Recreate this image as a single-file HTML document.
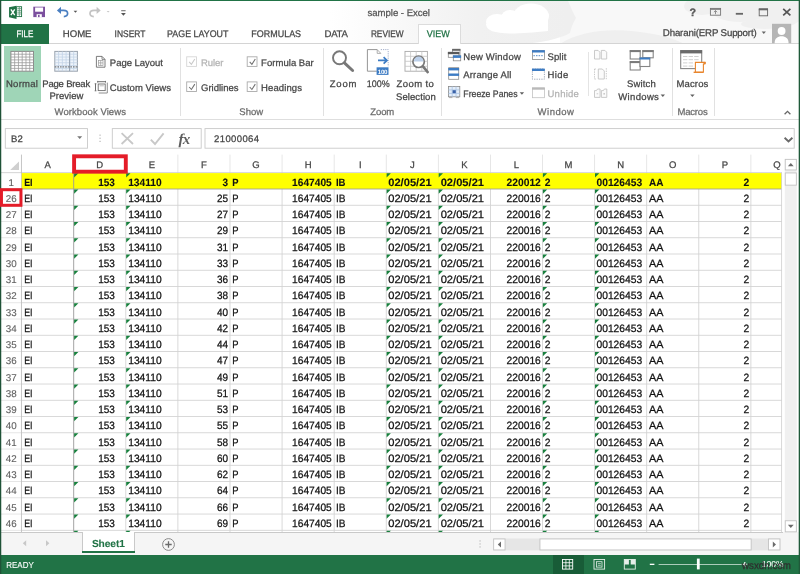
<!DOCTYPE html>
<html><head><meta charset="utf-8"><title>sample - Excel</title>
<style>
html,body{margin:0;padding:0;background:#fff;}
body{width:800px;height:574px;position:relative;overflow:hidden;font-family:"Liberation Sans",sans-serif;text-rendering:geometricPrecision;}
.r{position:absolute;display:block;}
.t{position:absolute;display:block;white-space:pre;line-height:1;}
</style></head><body>
<div class="r" style="left:0.00px;top:0.00px;width:800.00px;height:574.00px;background:#fff;"></div>
<svg class="r" style="left:320.00px;top:1.00px" width="479" height="43" viewBox="0 0 479 43"><defs><linearGradient id="cg" gradientUnits="userSpaceOnUse" x1="10" x2="248" y1="0" y2="0"><stop offset="0" stop-color="#fff"/><stop offset="0.62" stop-color="#f1f1f1"/><stop offset="1" stop-color="#efefef"/></linearGradient></defs><rect x="240" y="0" width="239" height="43" fill="#f8f8f8"/><path d="M10 0H248C251 6 253 12 256 17C253 22 251 27 250 32C240 38 220 42 200 43H10Z" fill="url(#cg)"/><g fill="#fff"><ellipse cx="177" cy="21" rx="11" ry="8"/><ellipse cx="190" cy="17" rx="9" ry="8"/><ellipse cx="211" cy="15" rx="18" ry="12.5"/><path d="M166 23C166 34 190 34 228 30L228 16L180 16Z"/></g><path d="M240 43C260 30 290 27 320 31S355 39 365 43Z" fill="#efefef"/><g fill="#f0f0f0"><ellipse cx="382" cy="5" rx="18" ry="9"/><ellipse cx="420" cy="8" rx="30" ry="13"/><ellipse cx="462" cy="10" rx="22" ry="16"/><ellipse cx="445" cy="23" rx="24" ry="5"/></g></svg>
<div class="r" style="left:1.00px;top:23.80px;width:48.20px;height:19.90px;background:#217346;"></div>
<div class="r" style="left:49.20px;top:43.20px;width:750.00px;height:0.90px;background:#d4d4d4;"></div>
<div class="r" style="left:417.50px;top:24.20px;width:43.00px;height:20.30px;background:#fff;border:0.9px solid #dcdcdc;border-bottom:none;box-sizing:border-box;"></div>
<div class="r" style="left:1.00px;top:119.00px;width:798.00px;height:0.90px;background:#dedede;"></div>
<div class="r" style="left:179.70px;top:48.00px;width:0.90px;height:67.50px;background:#e1e1e1;"></div>
<div class="r" style="left:322.50px;top:48.00px;width:0.90px;height:67.50px;background:#e1e1e1;"></div>
<div class="r" style="left:441.00px;top:48.00px;width:0.90px;height:67.50px;background:#e1e1e1;"></div>
<div class="r" style="left:671.60px;top:48.00px;width:0.90px;height:67.50px;background:#e1e1e1;"></div>
<div class="r" style="left:714.10px;top:48.00px;width:0.90px;height:67.50px;background:#e1e1e1;"></div>
<div class="r" style="left:588.10px;top:52.30px;width:0.90px;height:44.00px;background:#e4e4e4;"></div>
<div class="r" style="left:4.30px;top:46.30px;width:36.70px;height:55.70px;background:#9fd5b7;"></div>
<svg class="r" style="left:0.00px;top:0.00px" width="800" height="574" viewBox="0 0 800 574"><rect x="5.3" y="128.6" width="82.20" height="19.60" fill="#fff" stroke="#c9c9c9" stroke-width="0.9"/><rect x="112.3" y="128.6" width="88.90" height="19.60" fill="#fff" stroke="#c9c9c9" stroke-width="0.9"/><rect x="205" y="128.6" width="589.20" height="19.60" fill="#fff" stroke="#c9c9c9" stroke-width="0.9"/></svg>
<svg class="r" style="left:0.00px;top:0.00px" width="800" height="574" viewBox="0 0 800 574"><rect x="125.38" y="154.60" width="0.85" height="18.10" fill="#e2e2e2"/><rect x="125.38" y="172.70" width="0.85" height="359.60" fill="#d2d2d2"/><rect x="177.46" y="154.60" width="0.85" height="18.10" fill="#e2e2e2"/><rect x="177.46" y="172.70" width="0.85" height="359.60" fill="#d2d2d2"/><rect x="229.56" y="154.60" width="0.85" height="18.10" fill="#e2e2e2"/><rect x="229.56" y="172.70" width="0.85" height="359.60" fill="#d2d2d2"/><rect x="281.64" y="154.60" width="0.85" height="18.10" fill="#e2e2e2"/><rect x="281.64" y="172.70" width="0.85" height="359.60" fill="#d2d2d2"/><rect x="333.74" y="154.60" width="0.85" height="18.10" fill="#e2e2e2"/><rect x="333.74" y="172.70" width="0.85" height="359.60" fill="#d2d2d2"/><rect x="385.82" y="154.60" width="0.85" height="18.10" fill="#e2e2e2"/><rect x="385.82" y="172.70" width="0.85" height="359.60" fill="#d2d2d2"/><rect x="437.91" y="154.60" width="0.85" height="18.10" fill="#e2e2e2"/><rect x="437.91" y="172.70" width="0.85" height="359.60" fill="#d2d2d2"/><rect x="490.00" y="154.60" width="0.85" height="18.10" fill="#e2e2e2"/><rect x="490.00" y="172.70" width="0.85" height="359.60" fill="#d2d2d2"/><rect x="542.10" y="154.60" width="0.85" height="18.10" fill="#e2e2e2"/><rect x="542.10" y="172.70" width="0.85" height="359.60" fill="#d2d2d2"/><rect x="594.19" y="154.60" width="0.85" height="18.10" fill="#e2e2e2"/><rect x="594.19" y="172.70" width="0.85" height="359.60" fill="#d2d2d2"/><rect x="646.28" y="154.60" width="0.85" height="18.10" fill="#e2e2e2"/><rect x="646.28" y="172.70" width="0.85" height="359.60" fill="#d2d2d2"/><rect x="698.37" y="154.60" width="0.85" height="18.10" fill="#e2e2e2"/><rect x="698.37" y="172.70" width="0.85" height="359.60" fill="#d2d2d2"/><rect x="750.46" y="154.60" width="0.85" height="18.10" fill="#e2e2e2"/><rect x="750.46" y="172.70" width="0.85" height="359.60" fill="#d2d2d2"/><rect x="73.28" y="154.60" width="0.85" height="18.10" fill="#e2e2e2"/><rect x="1.00" y="204.83" width="20.40" height="0.85" fill="#e2e2e2"/><rect x="21.40" y="204.83" width="761.00" height="0.85" fill="#d2d2d2"/><rect x="1.00" y="221.08" width="20.40" height="0.85" fill="#e2e2e2"/><rect x="21.40" y="221.08" width="761.00" height="0.85" fill="#d2d2d2"/><rect x="1.00" y="237.33" width="20.40" height="0.85" fill="#e2e2e2"/><rect x="21.40" y="237.33" width="761.00" height="0.85" fill="#d2d2d2"/><rect x="1.00" y="253.58" width="20.40" height="0.85" fill="#e2e2e2"/><rect x="21.40" y="253.58" width="761.00" height="0.85" fill="#d2d2d2"/><rect x="1.00" y="269.83" width="20.40" height="0.85" fill="#e2e2e2"/><rect x="21.40" y="269.83" width="761.00" height="0.85" fill="#d2d2d2"/><rect x="1.00" y="286.09" width="20.40" height="0.85" fill="#e2e2e2"/><rect x="21.40" y="286.09" width="761.00" height="0.85" fill="#d2d2d2"/><rect x="1.00" y="302.34" width="20.40" height="0.85" fill="#e2e2e2"/><rect x="21.40" y="302.34" width="761.00" height="0.85" fill="#d2d2d2"/><rect x="1.00" y="318.59" width="20.40" height="0.85" fill="#e2e2e2"/><rect x="21.40" y="318.59" width="761.00" height="0.85" fill="#d2d2d2"/><rect x="1.00" y="334.84" width="20.40" height="0.85" fill="#e2e2e2"/><rect x="21.40" y="334.84" width="761.00" height="0.85" fill="#d2d2d2"/><rect x="1.00" y="351.09" width="20.40" height="0.85" fill="#e2e2e2"/><rect x="21.40" y="351.09" width="761.00" height="0.85" fill="#d2d2d2"/><rect x="1.00" y="367.35" width="20.40" height="0.85" fill="#e2e2e2"/><rect x="21.40" y="367.35" width="761.00" height="0.85" fill="#d2d2d2"/><rect x="1.00" y="383.60" width="20.40" height="0.85" fill="#e2e2e2"/><rect x="21.40" y="383.60" width="761.00" height="0.85" fill="#d2d2d2"/><rect x="1.00" y="399.85" width="20.40" height="0.85" fill="#e2e2e2"/><rect x="21.40" y="399.85" width="761.00" height="0.85" fill="#d2d2d2"/><rect x="1.00" y="416.10" width="20.40" height="0.85" fill="#e2e2e2"/><rect x="21.40" y="416.10" width="761.00" height="0.85" fill="#d2d2d2"/><rect x="1.00" y="432.35" width="20.40" height="0.85" fill="#e2e2e2"/><rect x="21.40" y="432.35" width="761.00" height="0.85" fill="#d2d2d2"/><rect x="1.00" y="448.61" width="20.40" height="0.85" fill="#e2e2e2"/><rect x="21.40" y="448.61" width="761.00" height="0.85" fill="#d2d2d2"/><rect x="1.00" y="464.86" width="20.40" height="0.85" fill="#e2e2e2"/><rect x="21.40" y="464.86" width="761.00" height="0.85" fill="#d2d2d2"/><rect x="1.00" y="481.11" width="20.40" height="0.85" fill="#e2e2e2"/><rect x="21.40" y="481.11" width="761.00" height="0.85" fill="#d2d2d2"/><rect x="1.00" y="497.36" width="20.40" height="0.85" fill="#e2e2e2"/><rect x="21.40" y="497.36" width="761.00" height="0.85" fill="#d2d2d2"/><rect x="1.00" y="513.62" width="20.40" height="0.85" fill="#e2e2e2"/><rect x="21.40" y="513.62" width="761.00" height="0.85" fill="#d2d2d2"/><rect x="1.00" y="529.87" width="20.40" height="0.85" fill="#e2e2e2"/><rect x="21.40" y="529.87" width="761.00" height="0.85" fill="#d2d2d2"/><rect x="1.00" y="172.27" width="781.40" height="0.85" fill="#cdcdcd"/><rect x="20.97" y="154.60" width="0.85" height="377.70" fill="#bcbcbc"/><rect x="21.80" y="173.10" width="760.60" height="15.90" fill="#ffff00"/><rect x="73.26" y="172.70" width="0.9" height="359.60" fill="#9a9a9a"/><rect x="1.00" y="188.55" width="781.40" height="0.9" fill="#a4a492"/></svg>
<div class="r" style="left:782.40px;top:150.00px;width:17.60px;height:382.30px;background:#fff;"></div>
<svg class="r" style="left:9.60px;top:160.90px" width="9.4" height="9.2" viewBox="0 0 9.4 9.2"><path d="M9.4 0V9.2H0Z" fill="#cfcfcf"/></svg>
<svg class="r" style="left:0.00px;top:0.00px" width="800" height="574" viewBox="0 0 800 574"><g fill="#17803d"><path d="M74.1 173.2h4.3l-4.3 4.3z"/><path d="M126.2 173.2h4.3l-4.3 4.3z"/><path d="M386.6 173.2h4.3l-4.3 4.3z"/><path d="M438.7 173.2h4.3l-4.3 4.3z"/><path d="M542.9 173.2h4.3l-4.3 4.3z"/><path d="M595.0 173.2h4.3l-4.3 4.3z"/><path d="M74.1 189.5h4.3l-4.3 4.3z"/><path d="M126.2 189.5h4.3l-4.3 4.3z"/><path d="M386.6 189.5h4.3l-4.3 4.3z"/><path d="M438.7 189.5h4.3l-4.3 4.3z"/><path d="M542.9 189.5h4.3l-4.3 4.3z"/><path d="M595.0 189.5h4.3l-4.3 4.3z"/><path d="M74.1 205.8h4.3l-4.3 4.3z"/><path d="M126.2 205.8h4.3l-4.3 4.3z"/><path d="M386.6 205.8h4.3l-4.3 4.3z"/><path d="M438.7 205.8h4.3l-4.3 4.3z"/><path d="M542.9 205.8h4.3l-4.3 4.3z"/><path d="M595.0 205.8h4.3l-4.3 4.3z"/><path d="M74.1 222.0h4.3l-4.3 4.3z"/><path d="M126.2 222.0h4.3l-4.3 4.3z"/><path d="M386.6 222.0h4.3l-4.3 4.3z"/><path d="M438.7 222.0h4.3l-4.3 4.3z"/><path d="M542.9 222.0h4.3l-4.3 4.3z"/><path d="M595.0 222.0h4.3l-4.3 4.3z"/><path d="M74.1 238.3h4.3l-4.3 4.3z"/><path d="M126.2 238.3h4.3l-4.3 4.3z"/><path d="M386.6 238.3h4.3l-4.3 4.3z"/><path d="M438.7 238.3h4.3l-4.3 4.3z"/><path d="M542.9 238.3h4.3l-4.3 4.3z"/><path d="M595.0 238.3h4.3l-4.3 4.3z"/><path d="M74.1 254.5h4.3l-4.3 4.3z"/><path d="M126.2 254.5h4.3l-4.3 4.3z"/><path d="M386.6 254.5h4.3l-4.3 4.3z"/><path d="M438.7 254.5h4.3l-4.3 4.3z"/><path d="M542.9 254.5h4.3l-4.3 4.3z"/><path d="M595.0 254.5h4.3l-4.3 4.3z"/><path d="M74.1 270.8h4.3l-4.3 4.3z"/><path d="M126.2 270.8h4.3l-4.3 4.3z"/><path d="M386.6 270.8h4.3l-4.3 4.3z"/><path d="M438.7 270.8h4.3l-4.3 4.3z"/><path d="M542.9 270.8h4.3l-4.3 4.3z"/><path d="M595.0 270.8h4.3l-4.3 4.3z"/><path d="M74.1 287.0h4.3l-4.3 4.3z"/><path d="M126.2 287.0h4.3l-4.3 4.3z"/><path d="M386.6 287.0h4.3l-4.3 4.3z"/><path d="M438.7 287.0h4.3l-4.3 4.3z"/><path d="M542.9 287.0h4.3l-4.3 4.3z"/><path d="M595.0 287.0h4.3l-4.3 4.3z"/><path d="M74.1 303.3h4.3l-4.3 4.3z"/><path d="M126.2 303.3h4.3l-4.3 4.3z"/><path d="M386.6 303.3h4.3l-4.3 4.3z"/><path d="M438.7 303.3h4.3l-4.3 4.3z"/><path d="M542.9 303.3h4.3l-4.3 4.3z"/><path d="M595.0 303.3h4.3l-4.3 4.3z"/><path d="M74.1 319.5h4.3l-4.3 4.3z"/><path d="M126.2 319.5h4.3l-4.3 4.3z"/><path d="M386.6 319.5h4.3l-4.3 4.3z"/><path d="M438.7 319.5h4.3l-4.3 4.3z"/><path d="M542.9 319.5h4.3l-4.3 4.3z"/><path d="M595.0 319.5h4.3l-4.3 4.3z"/><path d="M74.1 335.8h4.3l-4.3 4.3z"/><path d="M126.2 335.8h4.3l-4.3 4.3z"/><path d="M386.6 335.8h4.3l-4.3 4.3z"/><path d="M438.7 335.8h4.3l-4.3 4.3z"/><path d="M542.9 335.8h4.3l-4.3 4.3z"/><path d="M595.0 335.8h4.3l-4.3 4.3z"/><path d="M74.1 352.0h4.3l-4.3 4.3z"/><path d="M126.2 352.0h4.3l-4.3 4.3z"/><path d="M386.6 352.0h4.3l-4.3 4.3z"/><path d="M438.7 352.0h4.3l-4.3 4.3z"/><path d="M542.9 352.0h4.3l-4.3 4.3z"/><path d="M595.0 352.0h4.3l-4.3 4.3z"/><path d="M74.1 368.3h4.3l-4.3 4.3z"/><path d="M126.2 368.3h4.3l-4.3 4.3z"/><path d="M386.6 368.3h4.3l-4.3 4.3z"/><path d="M438.7 368.3h4.3l-4.3 4.3z"/><path d="M542.9 368.3h4.3l-4.3 4.3z"/><path d="M595.0 368.3h4.3l-4.3 4.3z"/><path d="M74.1 384.5h4.3l-4.3 4.3z"/><path d="M126.2 384.5h4.3l-4.3 4.3z"/><path d="M386.6 384.5h4.3l-4.3 4.3z"/><path d="M438.7 384.5h4.3l-4.3 4.3z"/><path d="M542.9 384.5h4.3l-4.3 4.3z"/><path d="M595.0 384.5h4.3l-4.3 4.3z"/><path d="M74.1 400.8h4.3l-4.3 4.3z"/><path d="M126.2 400.8h4.3l-4.3 4.3z"/><path d="M386.6 400.8h4.3l-4.3 4.3z"/><path d="M438.7 400.8h4.3l-4.3 4.3z"/><path d="M542.9 400.8h4.3l-4.3 4.3z"/><path d="M595.0 400.8h4.3l-4.3 4.3z"/><path d="M74.1 417.0h4.3l-4.3 4.3z"/><path d="M126.2 417.0h4.3l-4.3 4.3z"/><path d="M386.6 417.0h4.3l-4.3 4.3z"/><path d="M438.7 417.0h4.3l-4.3 4.3z"/><path d="M542.9 417.0h4.3l-4.3 4.3z"/><path d="M595.0 417.0h4.3l-4.3 4.3z"/><path d="M74.1 433.3h4.3l-4.3 4.3z"/><path d="M126.2 433.3h4.3l-4.3 4.3z"/><path d="M386.6 433.3h4.3l-4.3 4.3z"/><path d="M438.7 433.3h4.3l-4.3 4.3z"/><path d="M542.9 433.3h4.3l-4.3 4.3z"/><path d="M595.0 433.3h4.3l-4.3 4.3z"/><path d="M74.1 449.5h4.3l-4.3 4.3z"/><path d="M126.2 449.5h4.3l-4.3 4.3z"/><path d="M386.6 449.5h4.3l-4.3 4.3z"/><path d="M438.7 449.5h4.3l-4.3 4.3z"/><path d="M542.9 449.5h4.3l-4.3 4.3z"/><path d="M595.0 449.5h4.3l-4.3 4.3z"/><path d="M74.1 465.8h4.3l-4.3 4.3z"/><path d="M126.2 465.8h4.3l-4.3 4.3z"/><path d="M386.6 465.8h4.3l-4.3 4.3z"/><path d="M438.7 465.8h4.3l-4.3 4.3z"/><path d="M542.9 465.8h4.3l-4.3 4.3z"/><path d="M595.0 465.8h4.3l-4.3 4.3z"/><path d="M74.1 482.0h4.3l-4.3 4.3z"/><path d="M126.2 482.0h4.3l-4.3 4.3z"/><path d="M386.6 482.0h4.3l-4.3 4.3z"/><path d="M438.7 482.0h4.3l-4.3 4.3z"/><path d="M542.9 482.0h4.3l-4.3 4.3z"/><path d="M595.0 482.0h4.3l-4.3 4.3z"/><path d="M74.1 498.3h4.3l-4.3 4.3z"/><path d="M126.2 498.3h4.3l-4.3 4.3z"/><path d="M386.6 498.3h4.3l-4.3 4.3z"/><path d="M438.7 498.3h4.3l-4.3 4.3z"/><path d="M542.9 498.3h4.3l-4.3 4.3z"/><path d="M595.0 498.3h4.3l-4.3 4.3z"/><path d="M74.1 514.5h4.3l-4.3 4.3z"/><path d="M126.2 514.5h4.3l-4.3 4.3z"/><path d="M386.6 514.5h4.3l-4.3 4.3z"/><path d="M438.7 514.5h4.3l-4.3 4.3z"/><path d="M542.9 514.5h4.3l-4.3 4.3z"/><path d="M595.0 514.5h4.3l-4.3 4.3z"/><path d="M74.1 530.8h4.3l-4.3 4.3z"/><path d="M126.2 530.8h4.3l-4.3 4.3z"/><path d="M386.6 530.8h4.3l-4.3 4.3z"/><path d="M438.7 530.8h4.3l-4.3 4.3z"/><path d="M542.9 530.8h4.3l-4.3 4.3z"/><path d="M595.0 530.8h4.3l-4.3 4.3z"/></g></svg>
<div class="r" style="left:1.00px;top:532.30px;width:798.00px;height:22.90px;background:#f5f5f5;"></div>
<div class="r" style="left:1.00px;top:531.85px;width:782.40px;height:0.90px;background:#c9c9c9;"></div>
<svg class="r" style="left:0.00px;top:0.00px" width="800" height="574" viewBox="0 0 800 574"><rect x="784.8" y="159" width="12" height="373.3" fill="#f0f0f0"/><rect x="785.25" y="159.35" width="11.10" height="10.60" fill="#fff" stroke="#c2c2c2" stroke-width="0.9"/><rect x="785.25" y="172.95" width="11.10" height="12.20" fill="#fff" stroke="#c2c2c2" stroke-width="0.9"/><rect x="785.25" y="520.75" width="11.10" height="11.10" fill="#fff" stroke="#c2c2c2" stroke-width="0.9"/><path d="M787.9 166.3h5.8l-2.9-3.2z" fill="#6a6a6a"/><path d="M787.9 524.8h5.8l-2.9 3.2z" fill="#6a6a6a"/><rect x="781.2" y="172.70" width="0.85" height="359.60" fill="#d2d2d2"/><rect x="493.2" y="538.5" width="287.2" height="11.9" fill="#e6e6e6"/><rect x="493.65" y="538.95" width="11.40" height="11.00" fill="#fff" stroke="#c2c2c2" stroke-width="0.9"/><rect x="768.55" y="538.95" width="11.40" height="11.00" fill="#fff" stroke="#c2c2c2" stroke-width="0.9"/><rect x="539.95" y="538.95" width="211.20" height="11.00" fill="#fff" stroke="#c2c2c2" stroke-width="0.9"/><path d="M501 541.6v5.8l-3.2-2.9z" fill="#6a6a6a"/><path d="M772.8 541.6v5.8l3.2-2.9z" fill="#6a6a6a"/><rect x="479.5" y="540.4" width="1.1" height="1.1" fill="#b0b0b0"/><rect x="479.5" y="543.4" width="1.1" height="1.1" fill="#b0b0b0"/><rect x="479.5" y="546.4" width="1.1" height="1.1" fill="#b0b0b0"/></svg>
<div class="r" style="left:82.40px;top:532.30px;width:52.50px;height:21.00px;background:#fff;border-left:0.9px solid #c9c9c9;border-right:0.9px solid #c9c9c9;box-sizing:border-box;"></div>
<div class="r" style="left:82.40px;top:551.30px;width:52.50px;height:1.80px;background:#217346;"></div>
<svg class="r" style="left:20.00px;top:538.00px" width="32" height="11" viewBox="0 0 32 11"><path d="M6.2 2.2v6l-3.4-3z" fill="#c8c8c8"/><path d="M26 2.2v6l3.4-3z" fill="#c8c8c8"/></svg>
<svg class="r" style="left:161.00px;top:536.50px" width="15" height="15" viewBox="0 0 15 15"><circle cx="7.5" cy="7.5" r="5.9" fill="none" stroke="#8a8a8a" stroke-width="1"/><path d="M4.3 7.5h6.4M7.5 4.3v6.4" stroke="#6a6a6a" stroke-width="1.3"/></svg>
<div class="r" style="left:0.00px;top:555.20px;width:800.00px;height:18.80px;background:#217346;"></div>
<div class="r" style="left:553.00px;top:555.20px;width:30.80px;height:18.80px;background:#185c37;"></div>
<svg class="r" style="left:0.00px;top:0.00px" width="800" height="574" viewBox="0 0 800 574"><rect x="0" y="0" width="800" height="1" fill="#217346"/><rect x="0" y="0" width="1.25" height="574" fill="#1f5237"/><rect x="798.7" y="0" width="1.3" height="574" fill="#1f5a3a"/></svg>
<svg class="r" style="left:0.00px;top:150.00px" width="140" height="60" viewBox="0 150 140 60"><rect x="74.1" y="156.3" width="51.7" height="15.4" fill="none" stroke="#e41c28" stroke-width="3.9"/><rect x="1.45" y="189.7" width="19.5" height="15.6" fill="none" stroke="#e41c28" stroke-width="3.0"/></svg>
<svg class="r" style="left:0;top:0;will-change:transform" width="800" height="574" viewBox="0 0 800 574"><path d="M9.05 7.2L16.5 5.7V19L9.05 17.3Z" fill="#217346"/><path d="M10.9 9.4L14.7 15.2M14.7 9.4L10.9 15.2" stroke="#fff" stroke-width="1.4" fill="none"/><rect x="16.6" y="6.7" width="5" height="9.9" fill="#fff" stroke="#217346" stroke-width="0.9"/><path d="M17.4 8.6h3.8M17.4 10.4h3.8M17.4 12.2h3.8M17.4 14h3.8M19.3 7v9.3" stroke="#217346" stroke-width="0.8" opacity="0.75"/><path d="M33.3 6.7H45V17.1H33.3Z" fill="#7b4f9e"/><rect x="35.1" y="7.5" width="8" height="4.2" fill="#fff"/><rect x="36.6" y="14.2" width="5.2" height="2.9" fill="#fff"/><rect x="38" y="14.9" width="1.6" height="2.2" fill="#7b4f9e"/><path d="M60.5 10.4H63.6C66.4 10.4 67.6 12.1 67.6 13.6C67.6 15.4 66.2 16.5 63.8 16.6" fill="none" stroke="#4a7fc1" stroke-width="1.7"/><path d="M56.9 10.4L61 6.8V14Z" fill="#4a7fc1"/><path d="M73.6 10.8h3.7l-1.85 2z" fill="#555"/><path d="M97.1 10.4H94C91.2 10.4 90 12.1 90 13.6C90 15.4 91.4 16.5 93.8 16.6" fill="none" stroke="#c3c3c3" stroke-width="1.7"/><path d="M100.7 10.4L96.6 6.8V14Z" fill="#c3c3c3"/><path d="M106.6 10.9h3l-1.5 1.7z" fill="#c8c8c8"/><path d="M121.2 10.3h4.4v0.9h-4.4z" fill="#555"/><path d="M121 12.9h4.8l-2.4 2.8z" fill="#555"/><text x="689.4" y="16" font-size="10.8" font-weight="bold" fill="#5c5c5c" stroke="#5c5c5c" stroke-width="0.35" font-family="Liberation Sans, sans-serif">?</text><rect x="710.4" y="8.4" width="10.2" height="6.8" fill="none" stroke="#777" stroke-width="0.9"/><path d="M710.4 9.2h10.2" stroke="#777" stroke-width="1.2"/><path d="M715.5 10.6v3.6M713.9 12.2l1.6-1.6 1.6 1.6" stroke="#777" stroke-width="0.8" fill="none"/><rect x="735.8" y="12.9" width="7.2" height="1.8" fill="#666"/><rect x="759.2" y="9.2" width="8.4" height="6.6" fill="none" stroke="#666" stroke-width="0.9"/><rect x="758.8" y="8.3" width="9.2" height="2" fill="#666"/><path d="M783.2 8.9L790.4 15.4M790.4 8.9L783.2 15.4" stroke="#555" stroke-width="1.7" fill="none"/><path d="M761.7 31.6h4.2l-2.1 2.3z" fill="#666"/><rect x="772" y="23.8" width="19.2" height="19.4" fill="#b5b5b5"/><circle cx="781.6" cy="31" r="3.9" fill="#fff"/><path d="M774.6 43.2C774.6 38.2 777.6 36.2 781.6 36.2S788.6 38.2 788.6 43.2Z" fill="#fff"/><rect x="10.9" y="51.4" width="22.6" height="19.8" fill="#fff" stroke="#8c8c8c" stroke-width="1"/><path d="M14.67 51.4v19.8M18.43 51.4v19.8M22.20 51.4v19.8M25.97 51.4v19.8M29.73 51.4v19.8M10.9 54.23h22.6M10.9 57.06h22.6M10.9 59.89h22.6M10.9 62.71h22.6M10.9 65.54h22.6M10.9 68.37h22.6" stroke="#9a9a9a" stroke-width="0.8" fill="none"/><rect x="54.8" y="51.4" width="22.6" height="19.8" fill="#eef4fb" stroke="#9aa3ad" stroke-width="1"/><path d="M58.57 51.4v19.8M62.33 51.4v19.8M66.10 51.4v19.8M69.87 51.4v19.8M73.63 51.4v19.8M54.8 54.23h22.6M54.8 57.06h22.6M54.8 59.89h22.6M54.8 62.71h22.6M54.8 65.54h22.6M54.8 68.37h22.6" stroke="#c3d3e6" stroke-width="0.8" fill="none"/><path d="M69.6 51.4v19.8" stroke="#93a0b0" stroke-width="1"/><path d="M54.8 66.9h22.6" stroke="#555" stroke-width="0.9" stroke-dasharray="1.6 1"/><path d="M96.4 56.4h5.6l3 3v7.8h-8.6z" fill="#fff" stroke="#6e6e6e" stroke-width="0.9"/><path d="M102 56.4v3h3" fill="none" stroke="#6e6e6e" stroke-width="0.8"/><rect x="98.4" y="60.4" width="4.6" height="5" fill="none" stroke="#9a9a9a" stroke-width="0.7"/><path d="M100.7 60.4v5M98.4 62.9h4.6" stroke="#9a9a9a" stroke-width="0.7"/><rect x="98.2" y="84" width="7" height="6.6" fill="#fff" stroke="#6e6e6e" stroke-width="0.9"/><path d="M99.6 85.8h4.2" stroke="#aaa" stroke-width="0.8"/><path d="M97.7 81.7h7.8M97.7 80.9v1.7M105.5 80.9v1.7M95.5 83.8v7M94.7 83.8h1.7M94.7 90.8h1.7" stroke="#6e6e6e" stroke-width="1" fill="none"/><path d="M107.3 82.6v10.4h-8.6" stroke="#8e8e8e" stroke-width="1" fill="none"/><rect x="186.7" y="56.8" width="9.8" height="9.6" fill="#fff" stroke="#d6d6d6" stroke-width="0.9"/><path d="M189.2 61.9l2.2 2.5 3.4-5.4" fill="none" stroke="#c9c9c9" stroke-width="1.05"/><rect x="186.7" y="81.9" width="9.8" height="9.6" fill="#fff" stroke="#ababab" stroke-width="0.9"/><path d="M189.2 87.0l2.2 2.5 3.4-5.4" fill="none" stroke="#707070" stroke-width="1.05"/><rect x="247.2" y="56.8" width="9.8" height="9.6" fill="#fff" stroke="#ababab" stroke-width="0.9"/><path d="M249.7 61.9l2.2 2.5 3.4-5.4" fill="none" stroke="#707070" stroke-width="1.05"/><rect x="247.2" y="81.9" width="9.8" height="9.6" fill="#fff" stroke="#ababab" stroke-width="0.9"/><path d="M249.7 87.0l2.2 2.5 3.4-5.4" fill="none" stroke="#707070" stroke-width="1.05"/><circle cx="339.5" cy="57.8" r="6.5" fill="none" stroke="#787878" stroke-width="1.9"/><path d="M344.4 62.9l8.2 7.6" stroke="#787878" stroke-width="3" stroke-linecap="round"/><path d="M377.2 49.6h-9.8v21.6h9.4" fill="none" stroke="#8a8a8a" stroke-width="0.9"/><path d="M377.2 49.6l3.6 3.8h-3.6z" fill="#fff" stroke="#9a9a9a" stroke-width="0.8"/><path d="M380.8 49.6h7.4v17" fill="none" stroke="#9aa7c4" stroke-width="0.9" stroke-dasharray="1.2 1"/><path d="M378 60.4h8.6M383.6 57.2l3.4 3.2-3.4 3.2" fill="none" stroke="#3d7cc4" stroke-width="1.7"/><rect x="376.6" y="67.3" width="11.9" height="7.6" fill="#3d7cc4"/><text x="382.5" y="73.6" font-size="6.2" font-weight="bold" fill="#fff" text-anchor="middle" font-family="Liberation Sans, sans-serif" style="letter-spacing:-0.3px">100</text><rect x="405" y="51.4" width="22.4" height="19.8" fill="#fff" stroke="#a8a8a8" stroke-width="0.9"/><path d="M405 56.3h22.4M405 61.3h22.4M405 66.3h22.4M410.6 51.4v19.8M416.2 51.4v19.8M421.8 51.4v19.8" stroke="#c4c4c4" stroke-width="0.8"/><circle cx="418.6" cy="61.8" r="5.7" fill="#fff" stroke="#787878" stroke-width="1.7"/><path d="M413.8 61.4a4.8 4.8 0 0 1 9.6 0z" fill="#bcd0ea"/><path d="M422.9 66.3l4.8 5.8" stroke="#787878" stroke-width="2.6" stroke-linecap="round"/><rect x="452.6" y="49.3" width="7.4" height="6" fill="#fff" stroke="#8a8a8a" stroke-width="0.8"/><rect x="452.2" y="48.9" width="8.2" height="1.9" fill="#666"/><rect x="448.3" y="52.3" width="10.6" height="5" fill="#fff" stroke="#8a8a8a" stroke-width="0.8"/><rect x="447.9" y="51.9" width="11.4" height="2.3" fill="#5a5a5a"/><rect x="453.3" y="55.8" width="7.4" height="5" fill="#fff" stroke="#8a8a8a" stroke-width="0.8"/><rect x="452.9" y="55.4" width="8.2" height="2.5" fill="#3d7cc4"/><rect x="448.7" y="67.7" width="10" height="11.6" fill="#fff" stroke="#8a8a8a" stroke-width="0.8"/><rect x="448.3" y="68" width="10.8" height="2.4" fill="#3d7cc4"/><rect x="448.3" y="73.5" width="10.8" height="2.4" fill="#3d7cc4"/><rect x="448.4" y="86.4" width="11.4" height="10.4" fill="#e4eefa" stroke="#8a8a8a" stroke-width="0.8"/><path d="M452.2 86.4v10.4M456 86.4v10.4M448.4 89.9h11.4M448.4 93.4h11.4" stroke="#a9c3e2" stroke-width="0.8"/><rect x="452.6" y="90.2" width="3.2" height="3" fill="#3a62a8"/><path d="M449 97.6h3.4M455.8 97.6h3.4" stroke="#9a9a9a" stroke-width="0.8"/><path d="M519.7 92.3h4.4l-2.2 2.4z" fill="#606060"/><rect x="532.4" y="50.6" width="12" height="8.8" fill="#fff" stroke="#8a8a8a" stroke-width="0.8"/><rect x="532" y="50.2" width="12.8" height="2.3" fill="#3d7cc4"/><path d="M533.4 55.7h10.4" stroke="#3d7cc4" stroke-width="0.9" stroke-dasharray="1.5 1.1"/><rect x="532.4" y="69" width="12" height="10.2" fill="#fff" stroke="#8a94a6" stroke-width="0.8" stroke-dasharray="1.3 1.1"/><rect x="532" y="68.6" width="12.8" height="2.4" fill="#3d7cc4"/><rect x="532.4" y="87.9" width="12" height="9.8" fill="#fff" stroke="#c2c2c2" stroke-width="0.8"/><rect x="532" y="87.5" width="12.8" height="2.2" fill="#b9b9b9"/><path d="M594.5 50.4h3.6l1.8 1.8v6.8h-5.4zM601.3 50.4h3.6l1.8 1.8v6.8h-5.4z" fill="#fbfbfb" stroke="#c4c4c4" stroke-width="0.9"/><path d="M594.5 69h2.2M594.5 79h2.2M594.5 69v10" fill="none" stroke="#c4c4c4" stroke-width="0.9" stroke-dasharray="1.4 1"/><path d="M598.3 69h4l2 2v8h-6z" fill="#fbfbfb" stroke="#c4c4c4" stroke-width="0.9"/><path d="M606.3 68.2v12" stroke="#c4c4c4" stroke-width="0.9" stroke-dasharray="1.4 1"/><path d="M594.5 90.6h2l1 -1.6h2.6v8.4h-5.6zM601.4 90.6h2l1 -1.6h2.4v8.4h-5.4z" fill="#fbfbfb" stroke="#c4c4c4" stroke-width="0.9"/><path d="M596.6 93.8h1.6M603.4 93.8h1.6M604.2 93v1.6" stroke="#c4c4c4" stroke-width="0.9"/><rect x="630.2" y="50.6" width="10" height="8.4" fill="#fff" stroke="#858585" stroke-width="1.1"/><rect x="629.8000000000001" y="50.2" width="10.8" height="1.9" fill="#7a7a7a"/><rect x="642.8" y="50.6" width="10.4" height="7.2" fill="#fff" stroke="#858585" stroke-width="1.1"/><rect x="642.4" y="50.2" width="11.200000000000001" height="1.9" fill="#7a7a7a"/><rect x="630.2" y="61.6" width="10" height="8.4" fill="#fff" stroke="#858585" stroke-width="1.1"/><rect x="629.8000000000001" y="61.2" width="10.8" height="1.9" fill="#7a7a7a"/><rect x="640" y="57.9" width="9.8" height="8.6" fill="#fff" stroke="#858585" stroke-width="1.1"/><rect x="639.6" y="57.5" width="10.600000000000001" height="2" fill="#3d7cc4"/><path d="M660.6 94.6h4.4l-2.2 2.4z" fill="#606060"/><rect x="680.7" y="50.6" width="21" height="18" fill="#fff" stroke="#858585" stroke-width="1.1"/><rect x="680.3000000000001" y="50.2" width="21.8" height="3.2" fill="#6a6a6a"/><path d="M683 56.5h16M683 59.7h16M683 62.9h10M683 66.1h10" stroke="#c9c9c9" stroke-width="0.9" stroke-dasharray="4.4 1.2"/><path d="M695.4 62.4h9.4v1.6h-1.4v8.2h-8z" fill="#fff" stroke="#e8862e" stroke-width="1.1"/><path d="M693.6 71.6h9.6v1.4h-9.6z" fill="#e8862e"/><path d="M703.6 61.9h2.2v2h-2.2z" fill="#e8862e"/><path d="M690.2 94.6h4.4l-2.2 2.4z" fill="#606060"/><path d="M784.6 114.2l2.9-2.9 2.9 2.9" fill="none" stroke="#666" stroke-width="1.3"/><path d="M77.2 136.2h5l-2.5 2.8z" fill="#777"/><rect x="99.5" y="134.6" width="1.1" height="1.1" fill="#a8a8a8"/><rect x="99.5" y="137.7" width="1.1" height="1.1" fill="#a8a8a8"/><rect x="99.5" y="140.8" width="1.1" height="1.1" fill="#a8a8a8"/><path d="M121.6 133.2l11.4 10.8M133 133.2l-11.4 10.8" stroke="#c8c8c8" stroke-width="1.8" fill="none"/><path d="M150.8 139.6l4.2 4.4 8.6-10.6" stroke="#c8c8c8" stroke-width="1.9" fill="none"/><text x="178.4" y="144" font-size="15" font-style="italic" font-weight="bold" fill="#5e5e5e" font-family="Liberation Serif, serif" style="letter-spacing:-0.6px">fx</text><path d="M784.6 137.8l3.9 3.6 3.9-3.6" fill="none" stroke="#6a6a6a" stroke-width="1.9"/><rect x="562.5" y="559.5" width="10.2" height="9.6" fill="none" stroke="#fff" stroke-width="0.9"/><path d="M565.9 559.5v9.6M569.3 559.5v9.6M562.5 562.7h10.2M562.5 565.9h10.2" stroke="#fff" stroke-width="0.8"/><rect x="594" y="559.5" width="10.6" height="9.6" fill="none" stroke="#e6efe9" stroke-width="0.9"/><rect x="596.6" y="561.7" width="5.4" height="5.4" fill="none" stroke="#e6efe9" stroke-width="0.8"/><path d="M597.8 563.6h3M597.8 565.3h3" stroke="#e6efe9" stroke-width="0.7"/><rect x="624.3" y="559.5" width="11" height="9.6" fill="none" stroke="#e6efe9" stroke-width="0.9"/><path d="M624.3 559.5h4.6v5h-4.6zM630.7 559.5h4.6v5h-4.6z" fill="#e6efe9"/><rect x="649.8" y="563.7" width="4.6" height="1.3" fill="#fff"/><rect x="658.6" y="564" width="83" height="0.8" fill="#cfe3d7"/><rect x="696.9" y="558.6" width="2.8" height="10.8" fill="#fff"/><path d="M742.4 564.3h4.8M744.8 561.9v4.8" stroke="#fff" stroke-width="1.2"/></svg>
<svg class="r" style="left:0;top:0;will-change:transform" width="800" height="574" viewBox="0 0 800 574" font-family="Liberation Sans, sans-serif"><defs><clipPath id="gc"><rect x="0" y="150" width="782.4" height="400"/></clipPath></defs><text x="367.52" y="16" font-size="9.6" fill="#555" stroke="#555" stroke-width="0.25" style="letter-spacing:-0.035px" >sample - Excel</text><text transform="translate(16.40 37) scale(0.8417 1)" font-size="9.6" fill="#fff" stroke="#fff" stroke-width="0.25" >FILE</text><text x="62.82" y="37" font-size="9.6" fill="#444" stroke="#444" stroke-width="0.25" style="letter-spacing:-0.035px" >HOME</text><text transform="translate(114.58 37) scale(0.8811 1)" font-size="9.6" fill="#444" stroke="#444" stroke-width="0.25" >INSERT</text><text transform="translate(167.06 37) scale(0.9252 1)" font-size="9.6" fill="#444" stroke="#444" stroke-width="0.25" >PAGE LAYOUT</text><text transform="translate(251.35 37) scale(0.9330 1)" font-size="9.6" fill="#444" stroke="#444" stroke-width="0.25" >FORMULAS</text><text x="324.52" y="37" font-size="9.6" fill="#444" stroke="#444" stroke-width="0.25" style="letter-spacing:-0.255px" >DATA</text><text transform="translate(370.88 37) scale(0.8652 1)" font-size="9.6" fill="#444" stroke="#444" stroke-width="0.25" >REVIEW</text><text transform="translate(426.75 37) scale(0.9401 1)" font-size="9.6" fill="#217346" stroke="#217346" stroke-width="0.25" >VIEW</text><text x="662.81" y="36" font-size="9.7" fill="#444" stroke="#444" stroke-width="0.25" style="letter-spacing:-0.150px" >Dharani(ERP Support)</text><text x="6.03" y="87" font-size="9.5" fill="#444" stroke="#444" stroke-width="0.25" style="letter-spacing:0.239px" >Normal</text><text x="42.32" y="87" font-size="9.5" fill="#444" stroke="#444" stroke-width="0.25" style="letter-spacing:-0.199px" >Page Break</text><text x="49.52" y="99" font-size="9.5" fill="#444" stroke="#444" stroke-width="0.25" style="letter-spacing:-0.005px" >Preview</text><text x="109.83" y="66" font-size="9.5" fill="#444" stroke="#444" stroke-width="0.25" style="letter-spacing:-0.018px" >Page Layout</text><text x="109.83" y="91" font-size="9.5" fill="#444" stroke="#444" stroke-width="0.25" style="letter-spacing:0.051px" >Custom Views</text><text x="54.52" y="115" font-size="9.5" fill="#6a6a6a" stroke="#6a6a6a" stroke-width="0.25" style="letter-spacing:0.075px" >Workbook Views</text><text x="201.03" y="66" font-size="9.5" fill="#b3b3b3" stroke="#b3b3b3" stroke-width="0.25" style="letter-spacing:-0.070px" >Ruler</text><text x="201.03" y="91" font-size="9.5" fill="#444" stroke="#444" stroke-width="0.25" style="letter-spacing:-0.004px" >Gridlines</text><text x="261.12" y="66" font-size="9.5" fill="#444" stroke="#444" stroke-width="0.25" style="letter-spacing:0.035px" >Formula Bar</text><text x="261.12" y="91" font-size="9.5" fill="#444" stroke="#444" stroke-width="0.25" style="letter-spacing:0.101px" >Headings</text><text x="239.33" y="115" font-size="9.5" fill="#6a6a6a" stroke="#6a6a6a" stroke-width="0.25" style="letter-spacing:0.021px" >Show</text><text x="329.82" y="87" font-size="9.5" fill="#444" stroke="#444" stroke-width="0.25" style="letter-spacing:0.742px" >Zoom</text><text transform="translate(366.75 87) scale(0.9406 1)" font-size="9.5" fill="#444" stroke="#444" stroke-width="0.25" >100%</text><text x="396.62" y="87" font-size="9.5" fill="#444" stroke="#444" stroke-width="0.25" style="letter-spacing:0.401px" >Zoom to</text><text x="396.02" y="100" font-size="9.5" fill="#444" stroke="#444" stroke-width="0.25" style="letter-spacing:0.085px" >Selection</text><text x="370.32" y="115" font-size="9.5" fill="#6a6a6a" stroke="#6a6a6a" stroke-width="0.25" style="letter-spacing:-0.108px" >Zoom</text><text x="463.32" y="60" font-size="9.5" fill="#444" stroke="#444" stroke-width="0.25" style="letter-spacing:0.222px" >New Window</text><text x="463.32" y="78" font-size="9.5" fill="#444" stroke="#444" stroke-width="0.25" style="letter-spacing:0.153px" >Arrange All</text><text transform="translate(463.37 97) scale(0.9157 1)" font-size="9.5" fill="#444" stroke="#444" stroke-width="0.25" >Freeze Panes</text><text x="547.52" y="60" font-size="9.5" fill="#444" stroke="#444" stroke-width="0.25" style="letter-spacing:0.094px" >Split</text><text x="547.52" y="78" font-size="9.5" fill="#444" stroke="#444" stroke-width="0.25" style="letter-spacing:0.403px" >Hide</text><text x="547.52" y="97" font-size="9.5" fill="#b3b3b3" stroke="#b3b3b3" stroke-width="0.25" style="letter-spacing:0.241px" >Unhide</text><text x="537.52" y="115" font-size="9.5" fill="#6a6a6a" stroke="#6a6a6a" stroke-width="0.25" style="letter-spacing:0.527px" >Window</text><text x="627.02" y="87" font-size="9.5" fill="#444" stroke="#444" stroke-width="0.25" style="letter-spacing:0.162px" >Switch</text><text x="618.32" y="100" font-size="9.5" fill="#444" stroke="#444" stroke-width="0.25" style="letter-spacing:0.330px" >Windows</text><text x="676.52" y="87" font-size="9.5" fill="#444" stroke="#444" stroke-width="0.25" style="letter-spacing:0.134px" >Macros</text><text x="677.52" y="115" font-size="9.5" fill="#6a6a6a" stroke="#6a6a6a" stroke-width="0.25" style="letter-spacing:-0.199px" >Macros</text><text x="10.93" y="142" font-size="9.5" fill="#444" stroke="#444" stroke-width="0.25" style="letter-spacing:0.315px" >B2</text><text x="214.03" y="142" font-size="9.5" fill="#444" stroke="#444" stroke-width="0.25" style="letter-spacing:0.398px" >21000064</text><text x="47.55" y="168" font-size="9.5" fill="#444" stroke="#444" stroke-width="0.25" text-anchor="middle" >A</text><text x="99.75" y="168" font-size="9.5" fill="#444" stroke="#444" stroke-width="0.25" text-anchor="middle" >D</text><text x="151.84" y="168" font-size="9.5" fill="#444" stroke="#444" stroke-width="0.25" text-anchor="middle" >E</text><text x="203.94" y="168" font-size="9.5" fill="#444" stroke="#444" stroke-width="0.25" text-anchor="middle" >F</text><text x="256.02" y="168" font-size="9.5" fill="#444" stroke="#444" stroke-width="0.25" text-anchor="middle" >G</text><text x="308.12" y="168" font-size="9.5" fill="#444" stroke="#444" stroke-width="0.25" text-anchor="middle" >H</text><text x="360.21" y="168" font-size="9.5" fill="#444" stroke="#444" stroke-width="0.25" text-anchor="middle" >I</text><text x="412.29" y="168" font-size="9.5" fill="#444" stroke="#444" stroke-width="0.25" text-anchor="middle" >J</text><text x="464.38" y="168" font-size="9.5" fill="#444" stroke="#444" stroke-width="0.25" text-anchor="middle" >K</text><text x="516.48" y="168" font-size="9.5" fill="#444" stroke="#444" stroke-width="0.25" text-anchor="middle" >L</text><text x="568.57" y="168" font-size="9.5" fill="#444" stroke="#444" stroke-width="0.25" text-anchor="middle" >M</text><text x="620.66" y="168" font-size="9.5" fill="#444" stroke="#444" stroke-width="0.25" text-anchor="middle" >N</text><text x="672.75" y="168" font-size="9.5" fill="#444" stroke="#444" stroke-width="0.25" text-anchor="middle" >O</text><text x="724.84" y="168" font-size="9.5" fill="#444" stroke="#444" stroke-width="0.25" text-anchor="middle" >P</text><text x="776.93" y="168" font-size="9.5" fill="#444" stroke="#444" stroke-width="0.25" text-anchor="middle" clip-path="url(#gc)">Q</text><text x="11.30" y="186" font-size="9.8" fill="#5e5e5e" stroke="#5e5e5e" stroke-width="0.12" text-anchor="middle" >1</text><text transform="translate(24.16 186) scale(0.8341 1)" font-size="10.6" fill="#111" stroke="#111" stroke-width="0.1" font-weight="bold" >EI</text><text transform="translate(98.20 186) scale(0.9417 1)" font-size="10.6" fill="#111" stroke="#111" stroke-width="0.1" font-weight="bold" >153</text><text transform="translate(128.19 186) scale(0.9646 1)" font-size="10.6" fill="#111" stroke="#111" stroke-width="0.1" font-weight="bold" >134110</text><text transform="translate(228.10 186) scale(0.94 1)" font-size="10.6" fill="#111" stroke="#111" stroke-width="0.1" text-anchor="end" font-weight="bold">3</text><text transform="translate(232.23 186) scale(0.8846 1)" font-size="10.6" fill="#111" stroke="#111" stroke-width="0.1" font-weight="bold" >P</text><text transform="translate(292.09 186) scale(0.9609 1)" font-size="10.6" fill="#111" stroke="#111" stroke-width="0.1" font-weight="bold" >1647405</text><text transform="translate(335.92 186) scale(0.9013 1)" font-size="10.6" fill="#111" stroke="#111" stroke-width="0.1" font-weight="bold" >IB</text><text transform="translate(388.24 186) scale(1.0507 1)" font-size="10.6" fill="#111" stroke="#111" stroke-width="0.1" font-weight="bold" >02/05/21</text><text transform="translate(440.64 186) scale(1.0531 1)" font-size="10.6" fill="#111" stroke="#111" stroke-width="0.1" font-weight="bold" >02/05/21</text><text transform="translate(506.49 186) scale(0.9712 1)" font-size="10.6" fill="#111" stroke="#111" stroke-width="0.1" font-weight="bold" >220012</text><text transform="translate(544.68 186) scale(0.9760 1)" font-size="10.6" fill="#111" stroke="#111" stroke-width="0.1" font-weight="bold" >2</text><text transform="translate(596.49 186) scale(0.9680 1)" font-size="10.6" fill="#111" stroke="#111" stroke-width="0.1" font-weight="bold" >00126453</text><text transform="translate(649.00 186) scale(0.9441 1)" font-size="10.6" fill="#111" stroke="#111" stroke-width="0.1" font-weight="bold" >AA</text><text transform="translate(743.38 186) scale(0.9760 1)" font-size="10.6" fill="#111" stroke="#111" stroke-width="0.1" font-weight="bold" >2</text><text x="11.30" y="202" font-size="9.8" fill="#5e5e5e" stroke="#5e5e5e" stroke-width="0.12" text-anchor="middle" >26</text><text transform="translate(24.16 202) scale(0.8341 1)" font-size="10.6" fill="#111" stroke="#111" stroke-width="0.25" >EI</text><text transform="translate(98.20 202) scale(0.9417 1)" font-size="10.6" fill="#111" stroke="#111" stroke-width="0.25" >153</text><text transform="translate(128.19 202) scale(0.9702 1)" font-size="10.6" fill="#111" stroke="#111" stroke-width="0.25" >134110</text><text transform="translate(228.10 202) scale(0.94 1)" font-size="10.6" fill="#111" stroke="#111" stroke-width="0.25" text-anchor="end">25</text><text transform="translate(232.23 202) scale(0.8846 1)" font-size="10.6" fill="#111" stroke="#111" stroke-width="0.25" >P</text><text transform="translate(292.09 202) scale(0.9609 1)" font-size="10.6" fill="#111" stroke="#111" stroke-width="0.25" >1647405</text><text transform="translate(335.89 202) scale(0.9540 1)" font-size="10.6" fill="#111" stroke="#111" stroke-width="0.25" >IB</text><text transform="translate(388.24 202) scale(1.0507 1)" font-size="10.6" fill="#111" stroke="#111" stroke-width="0.25" >02/05/21</text><text transform="translate(440.64 202) scale(1.0531 1)" font-size="10.6" fill="#111" stroke="#111" stroke-width="0.25" >02/05/21</text><text transform="translate(506.49 202) scale(0.9712 1)" font-size="10.6" fill="#111" stroke="#111" stroke-width="0.25" >220016</text><text transform="translate(544.68 202) scale(0.9760 1)" font-size="10.6" fill="#111" stroke="#111" stroke-width="0.25" >2</text><text transform="translate(596.49 202) scale(0.9680 1)" font-size="10.6" fill="#111" stroke="#111" stroke-width="0.25" >00126453</text><text transform="translate(648.96 202) scale(1.0222 1)" font-size="10.6" fill="#111" stroke="#111" stroke-width="0.25" >AA</text><text transform="translate(743.38 202) scale(0.9760 1)" font-size="10.6" fill="#111" stroke="#111" stroke-width="0.25" >2</text><text x="11.30" y="218" font-size="9.8" fill="#5e5e5e" stroke="#5e5e5e" stroke-width="0.12" text-anchor="middle" >27</text><text transform="translate(24.16 218) scale(0.8341 1)" font-size="10.6" fill="#111" stroke="#111" stroke-width="0.25" >EI</text><text transform="translate(98.20 218) scale(0.9417 1)" font-size="10.6" fill="#111" stroke="#111" stroke-width="0.25" >153</text><text transform="translate(128.19 218) scale(0.9702 1)" font-size="10.6" fill="#111" stroke="#111" stroke-width="0.25" >134110</text><text transform="translate(228.10 218) scale(0.94 1)" font-size="10.6" fill="#111" stroke="#111" stroke-width="0.25" text-anchor="end">27</text><text transform="translate(232.23 218) scale(0.8846 1)" font-size="10.6" fill="#111" stroke="#111" stroke-width="0.25" >P</text><text transform="translate(292.09 218) scale(0.9609 1)" font-size="10.6" fill="#111" stroke="#111" stroke-width="0.25" >1647405</text><text transform="translate(335.89 218) scale(0.9540 1)" font-size="10.6" fill="#111" stroke="#111" stroke-width="0.25" >IB</text><text transform="translate(388.24 218) scale(1.0507 1)" font-size="10.6" fill="#111" stroke="#111" stroke-width="0.25" >02/05/21</text><text transform="translate(440.64 218) scale(1.0531 1)" font-size="10.6" fill="#111" stroke="#111" stroke-width="0.25" >02/05/21</text><text transform="translate(506.49 218) scale(0.9712 1)" font-size="10.6" fill="#111" stroke="#111" stroke-width="0.25" >220016</text><text transform="translate(544.68 218) scale(0.9760 1)" font-size="10.6" fill="#111" stroke="#111" stroke-width="0.25" >2</text><text transform="translate(596.49 218) scale(0.9680 1)" font-size="10.6" fill="#111" stroke="#111" stroke-width="0.25" >00126453</text><text transform="translate(648.96 218) scale(1.0222 1)" font-size="10.6" fill="#111" stroke="#111" stroke-width="0.25" >AA</text><text transform="translate(743.38 218) scale(0.9760 1)" font-size="10.6" fill="#111" stroke="#111" stroke-width="0.25" >2</text><text x="11.30" y="234" font-size="9.8" fill="#5e5e5e" stroke="#5e5e5e" stroke-width="0.12" text-anchor="middle" >28</text><text transform="translate(24.16 234) scale(0.8341 1)" font-size="10.6" fill="#111" stroke="#111" stroke-width="0.25" >EI</text><text transform="translate(98.20 234) scale(0.9417 1)" font-size="10.6" fill="#111" stroke="#111" stroke-width="0.25" >153</text><text transform="translate(128.19 234) scale(0.9702 1)" font-size="10.6" fill="#111" stroke="#111" stroke-width="0.25" >134110</text><text transform="translate(228.10 234) scale(0.94 1)" font-size="10.6" fill="#111" stroke="#111" stroke-width="0.25" text-anchor="end">29</text><text transform="translate(232.23 234) scale(0.8846 1)" font-size="10.6" fill="#111" stroke="#111" stroke-width="0.25" >P</text><text transform="translate(292.09 234) scale(0.9609 1)" font-size="10.6" fill="#111" stroke="#111" stroke-width="0.25" >1647405</text><text transform="translate(335.89 234) scale(0.9540 1)" font-size="10.6" fill="#111" stroke="#111" stroke-width="0.25" >IB</text><text transform="translate(388.24 234) scale(1.0507 1)" font-size="10.6" fill="#111" stroke="#111" stroke-width="0.25" >02/05/21</text><text transform="translate(440.64 234) scale(1.0531 1)" font-size="10.6" fill="#111" stroke="#111" stroke-width="0.25" >02/05/21</text><text transform="translate(506.49 234) scale(0.9712 1)" font-size="10.6" fill="#111" stroke="#111" stroke-width="0.25" >220016</text><text transform="translate(544.68 234) scale(0.9760 1)" font-size="10.6" fill="#111" stroke="#111" stroke-width="0.25" >2</text><text transform="translate(596.49 234) scale(0.9680 1)" font-size="10.6" fill="#111" stroke="#111" stroke-width="0.25" >00126453</text><text transform="translate(648.96 234) scale(1.0222 1)" font-size="10.6" fill="#111" stroke="#111" stroke-width="0.25" >AA</text><text transform="translate(743.38 234) scale(0.9760 1)" font-size="10.6" fill="#111" stroke="#111" stroke-width="0.25" >2</text><text x="11.30" y="251" font-size="9.8" fill="#5e5e5e" stroke="#5e5e5e" stroke-width="0.12" text-anchor="middle" >29</text><text transform="translate(24.16 251) scale(0.8341 1)" font-size="10.6" fill="#111" stroke="#111" stroke-width="0.25" >EI</text><text transform="translate(98.20 251) scale(0.9417 1)" font-size="10.6" fill="#111" stroke="#111" stroke-width="0.25" >153</text><text transform="translate(128.19 251) scale(0.9702 1)" font-size="10.6" fill="#111" stroke="#111" stroke-width="0.25" >134110</text><text transform="translate(228.10 251) scale(0.94 1)" font-size="10.6" fill="#111" stroke="#111" stroke-width="0.25" text-anchor="end">31</text><text transform="translate(232.23 251) scale(0.8846 1)" font-size="10.6" fill="#111" stroke="#111" stroke-width="0.25" >P</text><text transform="translate(292.09 251) scale(0.9609 1)" font-size="10.6" fill="#111" stroke="#111" stroke-width="0.25" >1647405</text><text transform="translate(335.89 251) scale(0.9540 1)" font-size="10.6" fill="#111" stroke="#111" stroke-width="0.25" >IB</text><text transform="translate(388.24 251) scale(1.0507 1)" font-size="10.6" fill="#111" stroke="#111" stroke-width="0.25" >02/05/21</text><text transform="translate(440.64 251) scale(1.0531 1)" font-size="10.6" fill="#111" stroke="#111" stroke-width="0.25" >02/05/21</text><text transform="translate(506.49 251) scale(0.9712 1)" font-size="10.6" fill="#111" stroke="#111" stroke-width="0.25" >220016</text><text transform="translate(544.68 251) scale(0.9760 1)" font-size="10.6" fill="#111" stroke="#111" stroke-width="0.25" >2</text><text transform="translate(596.49 251) scale(0.9680 1)" font-size="10.6" fill="#111" stroke="#111" stroke-width="0.25" >00126453</text><text transform="translate(648.96 251) scale(1.0222 1)" font-size="10.6" fill="#111" stroke="#111" stroke-width="0.25" >AA</text><text transform="translate(743.38 251) scale(0.9760 1)" font-size="10.6" fill="#111" stroke="#111" stroke-width="0.25" >2</text><text x="11.30" y="267" font-size="9.8" fill="#5e5e5e" stroke="#5e5e5e" stroke-width="0.12" text-anchor="middle" >30</text><text transform="translate(24.16 267) scale(0.8341 1)" font-size="10.6" fill="#111" stroke="#111" stroke-width="0.25" >EI</text><text transform="translate(98.20 267) scale(0.9417 1)" font-size="10.6" fill="#111" stroke="#111" stroke-width="0.25" >153</text><text transform="translate(128.19 267) scale(0.9702 1)" font-size="10.6" fill="#111" stroke="#111" stroke-width="0.25" >134110</text><text transform="translate(228.10 267) scale(0.94 1)" font-size="10.6" fill="#111" stroke="#111" stroke-width="0.25" text-anchor="end">33</text><text transform="translate(232.23 267) scale(0.8846 1)" font-size="10.6" fill="#111" stroke="#111" stroke-width="0.25" >P</text><text transform="translate(292.09 267) scale(0.9609 1)" font-size="10.6" fill="#111" stroke="#111" stroke-width="0.25" >1647405</text><text transform="translate(335.89 267) scale(0.9540 1)" font-size="10.6" fill="#111" stroke="#111" stroke-width="0.25" >IB</text><text transform="translate(388.24 267) scale(1.0507 1)" font-size="10.6" fill="#111" stroke="#111" stroke-width="0.25" >02/05/21</text><text transform="translate(440.64 267) scale(1.0531 1)" font-size="10.6" fill="#111" stroke="#111" stroke-width="0.25" >02/05/21</text><text transform="translate(506.49 267) scale(0.9712 1)" font-size="10.6" fill="#111" stroke="#111" stroke-width="0.25" >220016</text><text transform="translate(544.68 267) scale(0.9760 1)" font-size="10.6" fill="#111" stroke="#111" stroke-width="0.25" >2</text><text transform="translate(596.49 267) scale(0.9680 1)" font-size="10.6" fill="#111" stroke="#111" stroke-width="0.25" >00126453</text><text transform="translate(648.96 267) scale(1.0222 1)" font-size="10.6" fill="#111" stroke="#111" stroke-width="0.25" >AA</text><text transform="translate(743.38 267) scale(0.9760 1)" font-size="10.6" fill="#111" stroke="#111" stroke-width="0.25" >2</text><text x="11.30" y="283" font-size="9.8" fill="#5e5e5e" stroke="#5e5e5e" stroke-width="0.12" text-anchor="middle" >31</text><text transform="translate(24.16 283) scale(0.8341 1)" font-size="10.6" fill="#111" stroke="#111" stroke-width="0.25" >EI</text><text transform="translate(98.20 283) scale(0.9417 1)" font-size="10.6" fill="#111" stroke="#111" stroke-width="0.25" >153</text><text transform="translate(128.19 283) scale(0.9702 1)" font-size="10.6" fill="#111" stroke="#111" stroke-width="0.25" >134110</text><text transform="translate(228.10 283) scale(0.94 1)" font-size="10.6" fill="#111" stroke="#111" stroke-width="0.25" text-anchor="end">36</text><text transform="translate(232.23 283) scale(0.8846 1)" font-size="10.6" fill="#111" stroke="#111" stroke-width="0.25" >P</text><text transform="translate(292.09 283) scale(0.9609 1)" font-size="10.6" fill="#111" stroke="#111" stroke-width="0.25" >1647405</text><text transform="translate(335.89 283) scale(0.9540 1)" font-size="10.6" fill="#111" stroke="#111" stroke-width="0.25" >IB</text><text transform="translate(388.24 283) scale(1.0507 1)" font-size="10.6" fill="#111" stroke="#111" stroke-width="0.25" >02/05/21</text><text transform="translate(440.64 283) scale(1.0531 1)" font-size="10.6" fill="#111" stroke="#111" stroke-width="0.25" >02/05/21</text><text transform="translate(506.49 283) scale(0.9712 1)" font-size="10.6" fill="#111" stroke="#111" stroke-width="0.25" >220016</text><text transform="translate(544.68 283) scale(0.9760 1)" font-size="10.6" fill="#111" stroke="#111" stroke-width="0.25" >2</text><text transform="translate(596.49 283) scale(0.9680 1)" font-size="10.6" fill="#111" stroke="#111" stroke-width="0.25" >00126453</text><text transform="translate(648.96 283) scale(1.0222 1)" font-size="10.6" fill="#111" stroke="#111" stroke-width="0.25" >AA</text><text transform="translate(743.38 283) scale(0.9760 1)" font-size="10.6" fill="#111" stroke="#111" stroke-width="0.25" >2</text><text x="11.30" y="299" font-size="9.8" fill="#5e5e5e" stroke="#5e5e5e" stroke-width="0.12" text-anchor="middle" >32</text><text transform="translate(24.16 299) scale(0.8341 1)" font-size="10.6" fill="#111" stroke="#111" stroke-width="0.25" >EI</text><text transform="translate(98.20 299) scale(0.9417 1)" font-size="10.6" fill="#111" stroke="#111" stroke-width="0.25" >153</text><text transform="translate(128.19 299) scale(0.9702 1)" font-size="10.6" fill="#111" stroke="#111" stroke-width="0.25" >134110</text><text transform="translate(228.10 299) scale(0.94 1)" font-size="10.6" fill="#111" stroke="#111" stroke-width="0.25" text-anchor="end">38</text><text transform="translate(232.23 299) scale(0.8846 1)" font-size="10.6" fill="#111" stroke="#111" stroke-width="0.25" >P</text><text transform="translate(292.09 299) scale(0.9609 1)" font-size="10.6" fill="#111" stroke="#111" stroke-width="0.25" >1647405</text><text transform="translate(335.89 299) scale(0.9540 1)" font-size="10.6" fill="#111" stroke="#111" stroke-width="0.25" >IB</text><text transform="translate(388.24 299) scale(1.0507 1)" font-size="10.6" fill="#111" stroke="#111" stroke-width="0.25" >02/05/21</text><text transform="translate(440.64 299) scale(1.0531 1)" font-size="10.6" fill="#111" stroke="#111" stroke-width="0.25" >02/05/21</text><text transform="translate(506.49 299) scale(0.9712 1)" font-size="10.6" fill="#111" stroke="#111" stroke-width="0.25" >220016</text><text transform="translate(544.68 299) scale(0.9760 1)" font-size="10.6" fill="#111" stroke="#111" stroke-width="0.25" >2</text><text transform="translate(596.49 299) scale(0.9680 1)" font-size="10.6" fill="#111" stroke="#111" stroke-width="0.25" >00126453</text><text transform="translate(648.96 299) scale(1.0222 1)" font-size="10.6" fill="#111" stroke="#111" stroke-width="0.25" >AA</text><text transform="translate(743.38 299) scale(0.9760 1)" font-size="10.6" fill="#111" stroke="#111" stroke-width="0.25" >2</text><text x="11.30" y="316" font-size="9.8" fill="#5e5e5e" stroke="#5e5e5e" stroke-width="0.12" text-anchor="middle" >33</text><text transform="translate(24.16 316) scale(0.8341 1)" font-size="10.6" fill="#111" stroke="#111" stroke-width="0.25" >EI</text><text transform="translate(98.20 316) scale(0.9417 1)" font-size="10.6" fill="#111" stroke="#111" stroke-width="0.25" >153</text><text transform="translate(128.19 316) scale(0.9702 1)" font-size="10.6" fill="#111" stroke="#111" stroke-width="0.25" >134110</text><text transform="translate(228.10 316) scale(0.94 1)" font-size="10.6" fill="#111" stroke="#111" stroke-width="0.25" text-anchor="end">40</text><text transform="translate(232.23 316) scale(0.8846 1)" font-size="10.6" fill="#111" stroke="#111" stroke-width="0.25" >P</text><text transform="translate(292.09 316) scale(0.9609 1)" font-size="10.6" fill="#111" stroke="#111" stroke-width="0.25" >1647405</text><text transform="translate(335.89 316) scale(0.9540 1)" font-size="10.6" fill="#111" stroke="#111" stroke-width="0.25" >IB</text><text transform="translate(388.24 316) scale(1.0507 1)" font-size="10.6" fill="#111" stroke="#111" stroke-width="0.25" >02/05/21</text><text transform="translate(440.64 316) scale(1.0531 1)" font-size="10.6" fill="#111" stroke="#111" stroke-width="0.25" >02/05/21</text><text transform="translate(506.49 316) scale(0.9712 1)" font-size="10.6" fill="#111" stroke="#111" stroke-width="0.25" >220016</text><text transform="translate(544.68 316) scale(0.9760 1)" font-size="10.6" fill="#111" stroke="#111" stroke-width="0.25" >2</text><text transform="translate(596.49 316) scale(0.9680 1)" font-size="10.6" fill="#111" stroke="#111" stroke-width="0.25" >00126453</text><text transform="translate(648.96 316) scale(1.0222 1)" font-size="10.6" fill="#111" stroke="#111" stroke-width="0.25" >AA</text><text transform="translate(743.38 316) scale(0.9760 1)" font-size="10.6" fill="#111" stroke="#111" stroke-width="0.25" >2</text><text x="11.30" y="332" font-size="9.8" fill="#5e5e5e" stroke="#5e5e5e" stroke-width="0.12" text-anchor="middle" >34</text><text transform="translate(24.16 332) scale(0.8341 1)" font-size="10.6" fill="#111" stroke="#111" stroke-width="0.25" >EI</text><text transform="translate(98.20 332) scale(0.9417 1)" font-size="10.6" fill="#111" stroke="#111" stroke-width="0.25" >153</text><text transform="translate(128.19 332) scale(0.9702 1)" font-size="10.6" fill="#111" stroke="#111" stroke-width="0.25" >134110</text><text transform="translate(228.10 332) scale(0.94 1)" font-size="10.6" fill="#111" stroke="#111" stroke-width="0.25" text-anchor="end">42</text><text transform="translate(232.23 332) scale(0.8846 1)" font-size="10.6" fill="#111" stroke="#111" stroke-width="0.25" >P</text><text transform="translate(292.09 332) scale(0.9609 1)" font-size="10.6" fill="#111" stroke="#111" stroke-width="0.25" >1647405</text><text transform="translate(335.89 332) scale(0.9540 1)" font-size="10.6" fill="#111" stroke="#111" stroke-width="0.25" >IB</text><text transform="translate(388.24 332) scale(1.0507 1)" font-size="10.6" fill="#111" stroke="#111" stroke-width="0.25" >02/05/21</text><text transform="translate(440.64 332) scale(1.0531 1)" font-size="10.6" fill="#111" stroke="#111" stroke-width="0.25" >02/05/21</text><text transform="translate(506.49 332) scale(0.9712 1)" font-size="10.6" fill="#111" stroke="#111" stroke-width="0.25" >220016</text><text transform="translate(544.68 332) scale(0.9760 1)" font-size="10.6" fill="#111" stroke="#111" stroke-width="0.25" >2</text><text transform="translate(596.49 332) scale(0.9680 1)" font-size="10.6" fill="#111" stroke="#111" stroke-width="0.25" >00126453</text><text transform="translate(648.96 332) scale(1.0222 1)" font-size="10.6" fill="#111" stroke="#111" stroke-width="0.25" >AA</text><text transform="translate(743.38 332) scale(0.9760 1)" font-size="10.6" fill="#111" stroke="#111" stroke-width="0.25" >2</text><text x="11.30" y="348" font-size="9.8" fill="#5e5e5e" stroke="#5e5e5e" stroke-width="0.12" text-anchor="middle" >35</text><text transform="translate(24.16 348) scale(0.8341 1)" font-size="10.6" fill="#111" stroke="#111" stroke-width="0.25" >EI</text><text transform="translate(98.20 348) scale(0.9417 1)" font-size="10.6" fill="#111" stroke="#111" stroke-width="0.25" >153</text><text transform="translate(128.19 348) scale(0.9702 1)" font-size="10.6" fill="#111" stroke="#111" stroke-width="0.25" >134110</text><text transform="translate(228.10 348) scale(0.94 1)" font-size="10.6" fill="#111" stroke="#111" stroke-width="0.25" text-anchor="end">44</text><text transform="translate(232.23 348) scale(0.8846 1)" font-size="10.6" fill="#111" stroke="#111" stroke-width="0.25" >P</text><text transform="translate(292.09 348) scale(0.9609 1)" font-size="10.6" fill="#111" stroke="#111" stroke-width="0.25" >1647405</text><text transform="translate(335.89 348) scale(0.9540 1)" font-size="10.6" fill="#111" stroke="#111" stroke-width="0.25" >IB</text><text transform="translate(388.24 348) scale(1.0507 1)" font-size="10.6" fill="#111" stroke="#111" stroke-width="0.25" >02/05/21</text><text transform="translate(440.64 348) scale(1.0531 1)" font-size="10.6" fill="#111" stroke="#111" stroke-width="0.25" >02/05/21</text><text transform="translate(506.49 348) scale(0.9712 1)" font-size="10.6" fill="#111" stroke="#111" stroke-width="0.25" >220016</text><text transform="translate(544.68 348) scale(0.9760 1)" font-size="10.6" fill="#111" stroke="#111" stroke-width="0.25" >2</text><text transform="translate(596.49 348) scale(0.9680 1)" font-size="10.6" fill="#111" stroke="#111" stroke-width="0.25" >00126453</text><text transform="translate(648.96 348) scale(1.0222 1)" font-size="10.6" fill="#111" stroke="#111" stroke-width="0.25" >AA</text><text transform="translate(743.38 348) scale(0.9760 1)" font-size="10.6" fill="#111" stroke="#111" stroke-width="0.25" >2</text><text x="11.30" y="364" font-size="9.8" fill="#5e5e5e" stroke="#5e5e5e" stroke-width="0.12" text-anchor="middle" >36</text><text transform="translate(24.16 364) scale(0.8341 1)" font-size="10.6" fill="#111" stroke="#111" stroke-width="0.25" >EI</text><text transform="translate(98.20 364) scale(0.9417 1)" font-size="10.6" fill="#111" stroke="#111" stroke-width="0.25" >153</text><text transform="translate(128.19 364) scale(0.9702 1)" font-size="10.6" fill="#111" stroke="#111" stroke-width="0.25" >134110</text><text transform="translate(228.10 364) scale(0.94 1)" font-size="10.6" fill="#111" stroke="#111" stroke-width="0.25" text-anchor="end">47</text><text transform="translate(232.23 364) scale(0.8846 1)" font-size="10.6" fill="#111" stroke="#111" stroke-width="0.25" >P</text><text transform="translate(292.09 364) scale(0.9609 1)" font-size="10.6" fill="#111" stroke="#111" stroke-width="0.25" >1647405</text><text transform="translate(335.89 364) scale(0.9540 1)" font-size="10.6" fill="#111" stroke="#111" stroke-width="0.25" >IB</text><text transform="translate(388.24 364) scale(1.0507 1)" font-size="10.6" fill="#111" stroke="#111" stroke-width="0.25" >02/05/21</text><text transform="translate(440.64 364) scale(1.0531 1)" font-size="10.6" fill="#111" stroke="#111" stroke-width="0.25" >02/05/21</text><text transform="translate(506.49 364) scale(0.9712 1)" font-size="10.6" fill="#111" stroke="#111" stroke-width="0.25" >220016</text><text transform="translate(544.68 364) scale(0.9760 1)" font-size="10.6" fill="#111" stroke="#111" stroke-width="0.25" >2</text><text transform="translate(596.49 364) scale(0.9680 1)" font-size="10.6" fill="#111" stroke="#111" stroke-width="0.25" >00126453</text><text transform="translate(648.96 364) scale(1.0222 1)" font-size="10.6" fill="#111" stroke="#111" stroke-width="0.25" >AA</text><text transform="translate(743.38 364) scale(0.9760 1)" font-size="10.6" fill="#111" stroke="#111" stroke-width="0.25" >2</text><text x="11.30" y="381" font-size="9.8" fill="#5e5e5e" stroke="#5e5e5e" stroke-width="0.12" text-anchor="middle" >37</text><text transform="translate(24.16 381) scale(0.8341 1)" font-size="10.6" fill="#111" stroke="#111" stroke-width="0.25" >EI</text><text transform="translate(98.20 381) scale(0.9417 1)" font-size="10.6" fill="#111" stroke="#111" stroke-width="0.25" >153</text><text transform="translate(128.19 381) scale(0.9702 1)" font-size="10.6" fill="#111" stroke="#111" stroke-width="0.25" >134110</text><text transform="translate(228.10 381) scale(0.94 1)" font-size="10.6" fill="#111" stroke="#111" stroke-width="0.25" text-anchor="end">49</text><text transform="translate(232.23 381) scale(0.8846 1)" font-size="10.6" fill="#111" stroke="#111" stroke-width="0.25" >P</text><text transform="translate(292.09 381) scale(0.9609 1)" font-size="10.6" fill="#111" stroke="#111" stroke-width="0.25" >1647405</text><text transform="translate(335.89 381) scale(0.9540 1)" font-size="10.6" fill="#111" stroke="#111" stroke-width="0.25" >IB</text><text transform="translate(388.24 381) scale(1.0507 1)" font-size="10.6" fill="#111" stroke="#111" stroke-width="0.25" >02/05/21</text><text transform="translate(440.64 381) scale(1.0531 1)" font-size="10.6" fill="#111" stroke="#111" stroke-width="0.25" >02/05/21</text><text transform="translate(506.49 381) scale(0.9712 1)" font-size="10.6" fill="#111" stroke="#111" stroke-width="0.25" >220016</text><text transform="translate(544.68 381) scale(0.9760 1)" font-size="10.6" fill="#111" stroke="#111" stroke-width="0.25" >2</text><text transform="translate(596.49 381) scale(0.9680 1)" font-size="10.6" fill="#111" stroke="#111" stroke-width="0.25" >00126453</text><text transform="translate(648.96 381) scale(1.0222 1)" font-size="10.6" fill="#111" stroke="#111" stroke-width="0.25" >AA</text><text transform="translate(743.38 381) scale(0.9760 1)" font-size="10.6" fill="#111" stroke="#111" stroke-width="0.25" >2</text><text x="11.30" y="397" font-size="9.8" fill="#5e5e5e" stroke="#5e5e5e" stroke-width="0.12" text-anchor="middle" >38</text><text transform="translate(24.16 397) scale(0.8341 1)" font-size="10.6" fill="#111" stroke="#111" stroke-width="0.25" >EI</text><text transform="translate(98.20 397) scale(0.9417 1)" font-size="10.6" fill="#111" stroke="#111" stroke-width="0.25" >153</text><text transform="translate(128.19 397) scale(0.9702 1)" font-size="10.6" fill="#111" stroke="#111" stroke-width="0.25" >134110</text><text transform="translate(228.10 397) scale(0.94 1)" font-size="10.6" fill="#111" stroke="#111" stroke-width="0.25" text-anchor="end">51</text><text transform="translate(232.23 397) scale(0.8846 1)" font-size="10.6" fill="#111" stroke="#111" stroke-width="0.25" >P</text><text transform="translate(292.09 397) scale(0.9609 1)" font-size="10.6" fill="#111" stroke="#111" stroke-width="0.25" >1647405</text><text transform="translate(335.89 397) scale(0.9540 1)" font-size="10.6" fill="#111" stroke="#111" stroke-width="0.25" >IB</text><text transform="translate(388.24 397) scale(1.0507 1)" font-size="10.6" fill="#111" stroke="#111" stroke-width="0.25" >02/05/21</text><text transform="translate(440.64 397) scale(1.0531 1)" font-size="10.6" fill="#111" stroke="#111" stroke-width="0.25" >02/05/21</text><text transform="translate(506.49 397) scale(0.9712 1)" font-size="10.6" fill="#111" stroke="#111" stroke-width="0.25" >220016</text><text transform="translate(544.68 397) scale(0.9760 1)" font-size="10.6" fill="#111" stroke="#111" stroke-width="0.25" >2</text><text transform="translate(596.49 397) scale(0.9680 1)" font-size="10.6" fill="#111" stroke="#111" stroke-width="0.25" >00126453</text><text transform="translate(648.96 397) scale(1.0222 1)" font-size="10.6" fill="#111" stroke="#111" stroke-width="0.25" >AA</text><text transform="translate(743.38 397) scale(0.9760 1)" font-size="10.6" fill="#111" stroke="#111" stroke-width="0.25" >2</text><text x="11.30" y="413" font-size="9.8" fill="#5e5e5e" stroke="#5e5e5e" stroke-width="0.12" text-anchor="middle" >39</text><text transform="translate(24.16 413) scale(0.8341 1)" font-size="10.6" fill="#111" stroke="#111" stroke-width="0.25" >EI</text><text transform="translate(98.20 413) scale(0.9417 1)" font-size="10.6" fill="#111" stroke="#111" stroke-width="0.25" >153</text><text transform="translate(128.19 413) scale(0.9702 1)" font-size="10.6" fill="#111" stroke="#111" stroke-width="0.25" >134110</text><text transform="translate(228.10 413) scale(0.94 1)" font-size="10.6" fill="#111" stroke="#111" stroke-width="0.25" text-anchor="end">53</text><text transform="translate(232.23 413) scale(0.8846 1)" font-size="10.6" fill="#111" stroke="#111" stroke-width="0.25" >P</text><text transform="translate(292.09 413) scale(0.9609 1)" font-size="10.6" fill="#111" stroke="#111" stroke-width="0.25" >1647405</text><text transform="translate(335.89 413) scale(0.9540 1)" font-size="10.6" fill="#111" stroke="#111" stroke-width="0.25" >IB</text><text transform="translate(388.24 413) scale(1.0507 1)" font-size="10.6" fill="#111" stroke="#111" stroke-width="0.25" >02/05/21</text><text transform="translate(440.64 413) scale(1.0531 1)" font-size="10.6" fill="#111" stroke="#111" stroke-width="0.25" >02/05/21</text><text transform="translate(506.49 413) scale(0.9712 1)" font-size="10.6" fill="#111" stroke="#111" stroke-width="0.25" >220016</text><text transform="translate(544.68 413) scale(0.9760 1)" font-size="10.6" fill="#111" stroke="#111" stroke-width="0.25" >2</text><text transform="translate(596.49 413) scale(0.9680 1)" font-size="10.6" fill="#111" stroke="#111" stroke-width="0.25" >00126453</text><text transform="translate(648.96 413) scale(1.0222 1)" font-size="10.6" fill="#111" stroke="#111" stroke-width="0.25" >AA</text><text transform="translate(743.38 413) scale(0.9760 1)" font-size="10.6" fill="#111" stroke="#111" stroke-width="0.25" >2</text><text x="11.30" y="429" font-size="9.8" fill="#5e5e5e" stroke="#5e5e5e" stroke-width="0.12" text-anchor="middle" >40</text><text transform="translate(24.16 429) scale(0.8341 1)" font-size="10.6" fill="#111" stroke="#111" stroke-width="0.25" >EI</text><text transform="translate(98.20 429) scale(0.9417 1)" font-size="10.6" fill="#111" stroke="#111" stroke-width="0.25" >153</text><text transform="translate(128.19 429) scale(0.9702 1)" font-size="10.6" fill="#111" stroke="#111" stroke-width="0.25" >134110</text><text transform="translate(228.10 429) scale(0.94 1)" font-size="10.6" fill="#111" stroke="#111" stroke-width="0.25" text-anchor="end">55</text><text transform="translate(232.23 429) scale(0.8846 1)" font-size="10.6" fill="#111" stroke="#111" stroke-width="0.25" >P</text><text transform="translate(292.09 429) scale(0.9609 1)" font-size="10.6" fill="#111" stroke="#111" stroke-width="0.25" >1647405</text><text transform="translate(335.89 429) scale(0.9540 1)" font-size="10.6" fill="#111" stroke="#111" stroke-width="0.25" >IB</text><text transform="translate(388.24 429) scale(1.0507 1)" font-size="10.6" fill="#111" stroke="#111" stroke-width="0.25" >02/05/21</text><text transform="translate(440.64 429) scale(1.0531 1)" font-size="10.6" fill="#111" stroke="#111" stroke-width="0.25" >02/05/21</text><text transform="translate(506.49 429) scale(0.9712 1)" font-size="10.6" fill="#111" stroke="#111" stroke-width="0.25" >220016</text><text transform="translate(544.68 429) scale(0.9760 1)" font-size="10.6" fill="#111" stroke="#111" stroke-width="0.25" >2</text><text transform="translate(596.49 429) scale(0.9680 1)" font-size="10.6" fill="#111" stroke="#111" stroke-width="0.25" >00126453</text><text transform="translate(648.96 429) scale(1.0222 1)" font-size="10.6" fill="#111" stroke="#111" stroke-width="0.25" >AA</text><text transform="translate(743.38 429) scale(0.9760 1)" font-size="10.6" fill="#111" stroke="#111" stroke-width="0.25" >2</text><text x="11.30" y="446" font-size="9.8" fill="#5e5e5e" stroke="#5e5e5e" stroke-width="0.12" text-anchor="middle" >41</text><text transform="translate(24.16 446) scale(0.8341 1)" font-size="10.6" fill="#111" stroke="#111" stroke-width="0.25" >EI</text><text transform="translate(98.20 446) scale(0.9417 1)" font-size="10.6" fill="#111" stroke="#111" stroke-width="0.25" >153</text><text transform="translate(128.19 446) scale(0.9702 1)" font-size="10.6" fill="#111" stroke="#111" stroke-width="0.25" >134110</text><text transform="translate(228.10 446) scale(0.94 1)" font-size="10.6" fill="#111" stroke="#111" stroke-width="0.25" text-anchor="end">58</text><text transform="translate(232.23 446) scale(0.8846 1)" font-size="10.6" fill="#111" stroke="#111" stroke-width="0.25" >P</text><text transform="translate(292.09 446) scale(0.9609 1)" font-size="10.6" fill="#111" stroke="#111" stroke-width="0.25" >1647405</text><text transform="translate(335.89 446) scale(0.9540 1)" font-size="10.6" fill="#111" stroke="#111" stroke-width="0.25" >IB</text><text transform="translate(388.24 446) scale(1.0507 1)" font-size="10.6" fill="#111" stroke="#111" stroke-width="0.25" >02/05/21</text><text transform="translate(440.64 446) scale(1.0531 1)" font-size="10.6" fill="#111" stroke="#111" stroke-width="0.25" >02/05/21</text><text transform="translate(506.49 446) scale(0.9712 1)" font-size="10.6" fill="#111" stroke="#111" stroke-width="0.25" >220016</text><text transform="translate(544.68 446) scale(0.9760 1)" font-size="10.6" fill="#111" stroke="#111" stroke-width="0.25" >2</text><text transform="translate(596.49 446) scale(0.9680 1)" font-size="10.6" fill="#111" stroke="#111" stroke-width="0.25" >00126453</text><text transform="translate(648.96 446) scale(1.0222 1)" font-size="10.6" fill="#111" stroke="#111" stroke-width="0.25" >AA</text><text transform="translate(743.38 446) scale(0.9760 1)" font-size="10.6" fill="#111" stroke="#111" stroke-width="0.25" >2</text><text x="11.30" y="462" font-size="9.8" fill="#5e5e5e" stroke="#5e5e5e" stroke-width="0.12" text-anchor="middle" >42</text><text transform="translate(24.16 462) scale(0.8341 1)" font-size="10.6" fill="#111" stroke="#111" stroke-width="0.25" >EI</text><text transform="translate(98.20 462) scale(0.9417 1)" font-size="10.6" fill="#111" stroke="#111" stroke-width="0.25" >153</text><text transform="translate(128.19 462) scale(0.9702 1)" font-size="10.6" fill="#111" stroke="#111" stroke-width="0.25" >134110</text><text transform="translate(228.10 462) scale(0.94 1)" font-size="10.6" fill="#111" stroke="#111" stroke-width="0.25" text-anchor="end">60</text><text transform="translate(232.23 462) scale(0.8846 1)" font-size="10.6" fill="#111" stroke="#111" stroke-width="0.25" >P</text><text transform="translate(292.09 462) scale(0.9609 1)" font-size="10.6" fill="#111" stroke="#111" stroke-width="0.25" >1647405</text><text transform="translate(335.89 462) scale(0.9540 1)" font-size="10.6" fill="#111" stroke="#111" stroke-width="0.25" >IB</text><text transform="translate(388.24 462) scale(1.0507 1)" font-size="10.6" fill="#111" stroke="#111" stroke-width="0.25" >02/05/21</text><text transform="translate(440.64 462) scale(1.0531 1)" font-size="10.6" fill="#111" stroke="#111" stroke-width="0.25" >02/05/21</text><text transform="translate(506.49 462) scale(0.9712 1)" font-size="10.6" fill="#111" stroke="#111" stroke-width="0.25" >220016</text><text transform="translate(544.68 462) scale(0.9760 1)" font-size="10.6" fill="#111" stroke="#111" stroke-width="0.25" >2</text><text transform="translate(596.49 462) scale(0.9680 1)" font-size="10.6" fill="#111" stroke="#111" stroke-width="0.25" >00126453</text><text transform="translate(648.96 462) scale(1.0222 1)" font-size="10.6" fill="#111" stroke="#111" stroke-width="0.25" >AA</text><text transform="translate(743.38 462) scale(0.9760 1)" font-size="10.6" fill="#111" stroke="#111" stroke-width="0.25" >2</text><text x="11.30" y="478" font-size="9.8" fill="#5e5e5e" stroke="#5e5e5e" stroke-width="0.12" text-anchor="middle" >43</text><text transform="translate(24.16 478) scale(0.8341 1)" font-size="10.6" fill="#111" stroke="#111" stroke-width="0.25" >EI</text><text transform="translate(98.20 478) scale(0.9417 1)" font-size="10.6" fill="#111" stroke="#111" stroke-width="0.25" >153</text><text transform="translate(128.19 478) scale(0.9702 1)" font-size="10.6" fill="#111" stroke="#111" stroke-width="0.25" >134110</text><text transform="translate(228.10 478) scale(0.94 1)" font-size="10.6" fill="#111" stroke="#111" stroke-width="0.25" text-anchor="end">62</text><text transform="translate(232.23 478) scale(0.8846 1)" font-size="10.6" fill="#111" stroke="#111" stroke-width="0.25" >P</text><text transform="translate(292.09 478) scale(0.9609 1)" font-size="10.6" fill="#111" stroke="#111" stroke-width="0.25" >1647405</text><text transform="translate(335.89 478) scale(0.9540 1)" font-size="10.6" fill="#111" stroke="#111" stroke-width="0.25" >IB</text><text transform="translate(388.24 478) scale(1.0507 1)" font-size="10.6" fill="#111" stroke="#111" stroke-width="0.25" >02/05/21</text><text transform="translate(440.64 478) scale(1.0531 1)" font-size="10.6" fill="#111" stroke="#111" stroke-width="0.25" >02/05/21</text><text transform="translate(506.49 478) scale(0.9712 1)" font-size="10.6" fill="#111" stroke="#111" stroke-width="0.25" >220016</text><text transform="translate(544.68 478) scale(0.9760 1)" font-size="10.6" fill="#111" stroke="#111" stroke-width="0.25" >2</text><text transform="translate(596.49 478) scale(0.9680 1)" font-size="10.6" fill="#111" stroke="#111" stroke-width="0.25" >00126453</text><text transform="translate(648.96 478) scale(1.0222 1)" font-size="10.6" fill="#111" stroke="#111" stroke-width="0.25" >AA</text><text transform="translate(743.38 478) scale(0.9760 1)" font-size="10.6" fill="#111" stroke="#111" stroke-width="0.25" >2</text><text x="11.30" y="494" font-size="9.8" fill="#5e5e5e" stroke="#5e5e5e" stroke-width="0.12" text-anchor="middle" >44</text><text transform="translate(24.16 494) scale(0.8341 1)" font-size="10.6" fill="#111" stroke="#111" stroke-width="0.25" >EI</text><text transform="translate(98.20 494) scale(0.9417 1)" font-size="10.6" fill="#111" stroke="#111" stroke-width="0.25" >153</text><text transform="translate(128.19 494) scale(0.9702 1)" font-size="10.6" fill="#111" stroke="#111" stroke-width="0.25" >134110</text><text transform="translate(228.10 494) scale(0.94 1)" font-size="10.6" fill="#111" stroke="#111" stroke-width="0.25" text-anchor="end">64</text><text transform="translate(232.23 494) scale(0.8846 1)" font-size="10.6" fill="#111" stroke="#111" stroke-width="0.25" >P</text><text transform="translate(292.09 494) scale(0.9609 1)" font-size="10.6" fill="#111" stroke="#111" stroke-width="0.25" >1647405</text><text transform="translate(335.89 494) scale(0.9540 1)" font-size="10.6" fill="#111" stroke="#111" stroke-width="0.25" >IB</text><text transform="translate(388.24 494) scale(1.0507 1)" font-size="10.6" fill="#111" stroke="#111" stroke-width="0.25" >02/05/21</text><text transform="translate(440.64 494) scale(1.0531 1)" font-size="10.6" fill="#111" stroke="#111" stroke-width="0.25" >02/05/21</text><text transform="translate(506.49 494) scale(0.9712 1)" font-size="10.6" fill="#111" stroke="#111" stroke-width="0.25" >220016</text><text transform="translate(544.68 494) scale(0.9760 1)" font-size="10.6" fill="#111" stroke="#111" stroke-width="0.25" >2</text><text transform="translate(596.49 494) scale(0.9680 1)" font-size="10.6" fill="#111" stroke="#111" stroke-width="0.25" >00126453</text><text transform="translate(648.96 494) scale(1.0222 1)" font-size="10.6" fill="#111" stroke="#111" stroke-width="0.25" >AA</text><text transform="translate(743.38 494) scale(0.9760 1)" font-size="10.6" fill="#111" stroke="#111" stroke-width="0.25" >2</text><text x="11.30" y="511" font-size="9.8" fill="#5e5e5e" stroke="#5e5e5e" stroke-width="0.12" text-anchor="middle" >45</text><text transform="translate(24.16 511) scale(0.8341 1)" font-size="10.6" fill="#111" stroke="#111" stroke-width="0.25" >EI</text><text transform="translate(98.20 511) scale(0.9417 1)" font-size="10.6" fill="#111" stroke="#111" stroke-width="0.25" >153</text><text transform="translate(128.19 511) scale(0.9702 1)" font-size="10.6" fill="#111" stroke="#111" stroke-width="0.25" >134110</text><text transform="translate(228.10 511) scale(0.94 1)" font-size="10.6" fill="#111" stroke="#111" stroke-width="0.25" text-anchor="end">66</text><text transform="translate(232.23 511) scale(0.8846 1)" font-size="10.6" fill="#111" stroke="#111" stroke-width="0.25" >P</text><text transform="translate(292.09 511) scale(0.9609 1)" font-size="10.6" fill="#111" stroke="#111" stroke-width="0.25" >1647405</text><text transform="translate(335.89 511) scale(0.9540 1)" font-size="10.6" fill="#111" stroke="#111" stroke-width="0.25" >IB</text><text transform="translate(388.24 511) scale(1.0507 1)" font-size="10.6" fill="#111" stroke="#111" stroke-width="0.25" >02/05/21</text><text transform="translate(440.64 511) scale(1.0531 1)" font-size="10.6" fill="#111" stroke="#111" stroke-width="0.25" >02/05/21</text><text transform="translate(506.49 511) scale(0.9712 1)" font-size="10.6" fill="#111" stroke="#111" stroke-width="0.25" >220016</text><text transform="translate(544.68 511) scale(0.9760 1)" font-size="10.6" fill="#111" stroke="#111" stroke-width="0.25" >2</text><text transform="translate(596.49 511) scale(0.9680 1)" font-size="10.6" fill="#111" stroke="#111" stroke-width="0.25" >00126453</text><text transform="translate(648.96 511) scale(1.0222 1)" font-size="10.6" fill="#111" stroke="#111" stroke-width="0.25" >AA</text><text transform="translate(743.38 511) scale(0.9760 1)" font-size="10.6" fill="#111" stroke="#111" stroke-width="0.25" >2</text><text x="11.30" y="527" font-size="9.8" fill="#5e5e5e" stroke="#5e5e5e" stroke-width="0.12" text-anchor="middle" >46</text><text transform="translate(24.16 527) scale(0.8341 1)" font-size="10.6" fill="#111" stroke="#111" stroke-width="0.25" >EI</text><text transform="translate(98.20 527) scale(0.9417 1)" font-size="10.6" fill="#111" stroke="#111" stroke-width="0.25" >153</text><text transform="translate(128.19 527) scale(0.9702 1)" font-size="10.6" fill="#111" stroke="#111" stroke-width="0.25" >134110</text><text transform="translate(228.10 527) scale(0.94 1)" font-size="10.6" fill="#111" stroke="#111" stroke-width="0.25" text-anchor="end">69</text><text transform="translate(232.23 527) scale(0.8846 1)" font-size="10.6" fill="#111" stroke="#111" stroke-width="0.25" >P</text><text transform="translate(292.09 527) scale(0.9609 1)" font-size="10.6" fill="#111" stroke="#111" stroke-width="0.25" >1647405</text><text transform="translate(335.89 527) scale(0.9540 1)" font-size="10.6" fill="#111" stroke="#111" stroke-width="0.25" >IB</text><text transform="translate(388.24 527) scale(1.0507 1)" font-size="10.6" fill="#111" stroke="#111" stroke-width="0.25" >02/05/21</text><text transform="translate(440.64 527) scale(1.0531 1)" font-size="10.6" fill="#111" stroke="#111" stroke-width="0.25" >02/05/21</text><text transform="translate(506.49 527) scale(0.9712 1)" font-size="10.6" fill="#111" stroke="#111" stroke-width="0.25" >220016</text><text transform="translate(544.68 527) scale(0.9760 1)" font-size="10.6" fill="#111" stroke="#111" stroke-width="0.25" >2</text><text transform="translate(596.49 527) scale(0.9680 1)" font-size="10.6" fill="#111" stroke="#111" stroke-width="0.25" >00126453</text><text transform="translate(648.96 527) scale(1.0222 1)" font-size="10.6" fill="#111" stroke="#111" stroke-width="0.25" >AA</text><text transform="translate(743.38 527) scale(0.9760 1)" font-size="10.6" fill="#111" stroke="#111" stroke-width="0.25" >2</text><text x="91.89" y="547" font-size="10.2" fill="#217346" stroke="#217346" stroke-width="0.1" style="letter-spacing:-0.072px" font-weight="bold" >Sheet1</text><text transform="translate(6.30 568) scale(0.9272 1)" font-size="8.6" fill="#fff" stroke="#fff" stroke-width="0.1" >READY</text><text x="761.87" y="567" font-size="8.6" fill="#fff" stroke="#fff" stroke-width="0.1" style="letter-spacing:-0.059px" >100%</text><text transform="translate(742.01 569) scale(0.9234 1)" font-size="10.6" fill="#2e2e2e" stroke="#2e2e2e" stroke-width="0.25" >wsxdn.com</text></svg>
</body></html>
